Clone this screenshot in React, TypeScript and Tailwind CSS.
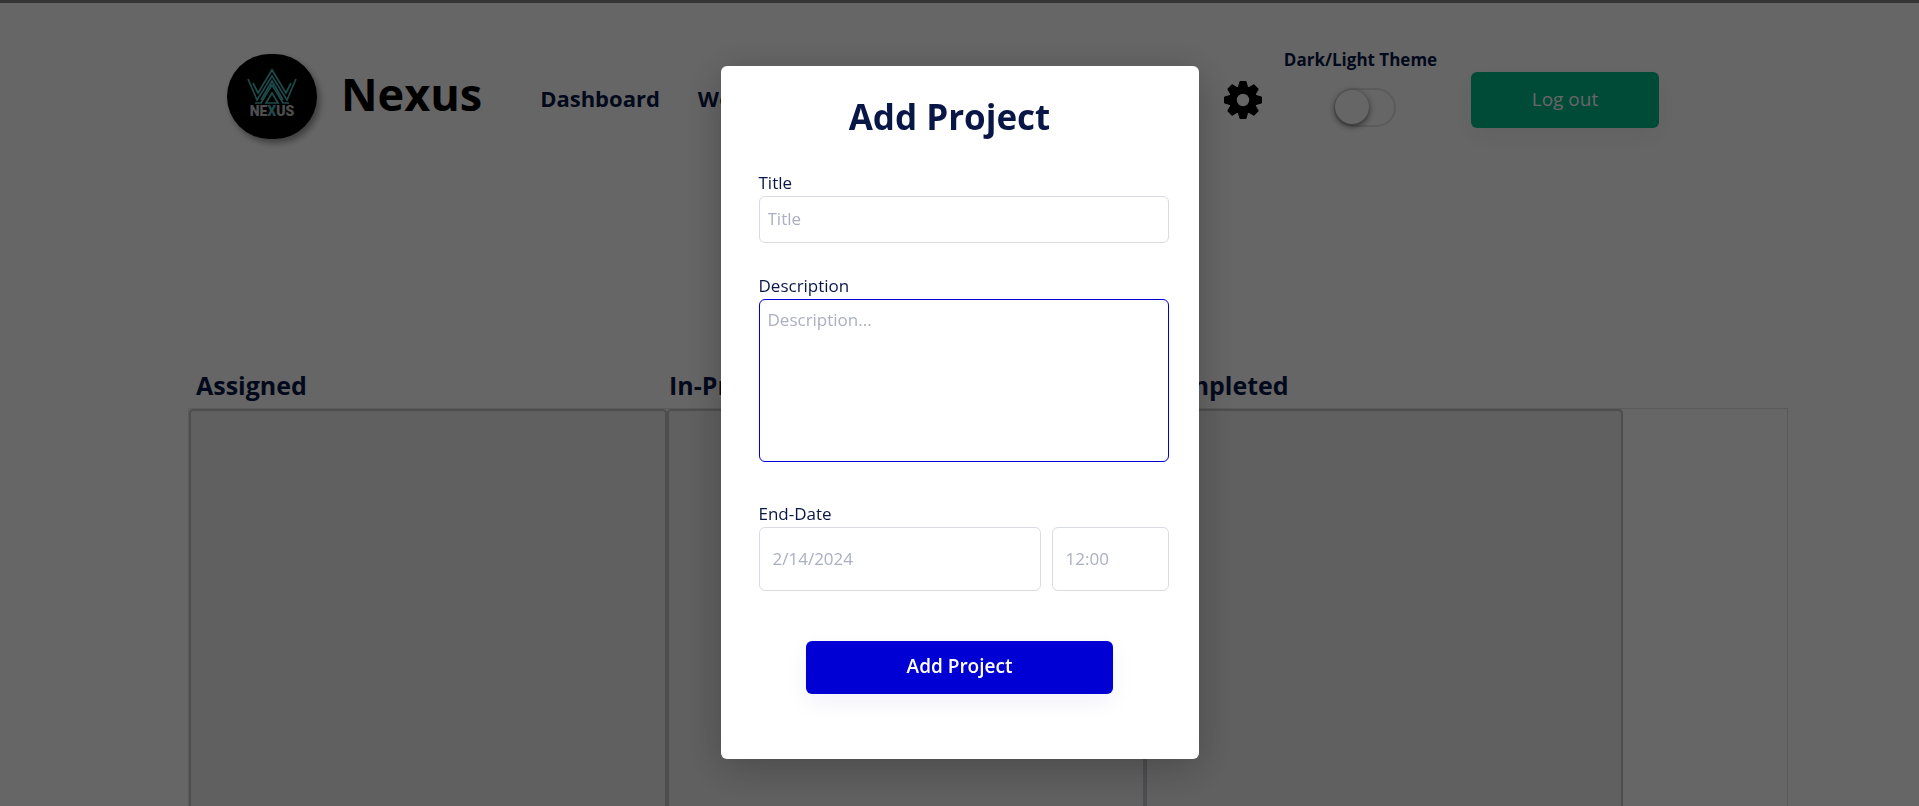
import React, { useState } from 'react';

const columns = ['Assigned', 'In-Progress', 'Completed'];

const NexusLogo = () => (
  <svg viewBox="0 0 90 85" className="h-[85px] w-[90px] rounded-full bg-black shadow-[3px_4px_6px_rgba(0,0,0,0.4)]">
    <g fill="none" stroke="#4fb9bd" strokeWidth="1.7">
      <path d="M21 25 30 46 45 22 60 46 69 25" />
      <path d="M26 29 31 39 45 16 59 39 64 29" />
      <path d="M28 49H34L45 31 56 49H62" />
      <path d="M34 46 45 27 56 46" />
      <path d="M39 49 45 39 51 49Z" />
    </g>
    <text
      x="45"
      y="62"
      textAnchor="middle"
      fontSize="14"
      fontWeight="900"
      fill="#c4c4c4"
      className="font-['Roboto',sans-serif]"
    >
      NE<tspan fill="#4fb9bd">X</tspan>US
    </text>
  </svg>
);

const GearIcon = () => (
  <svg viewBox="0 0 38 38" className="size-[38px]">
    <g fill="#000">
      {[0, 45, 90, 135].map((angle) => (
        <path
          key={angle}
          d="M16 0.5H22L23.5 6V32L22 37.5H16L14.5 32V6Z"
          stroke="#000"
          strokeLinejoin="round"
          transform={`rotate(${angle} 19 19)`}
        />
      ))}
      <circle cx="19" cy="19" r="14" />
    </g>
    <circle cx="19" cy="19" r="6.2" fill="#fff" />
  </svg>
);

const ThemeSwitch = () => {
  const [light, setLight] = useState(false);

  return (
    <label className="flex min-w-[157px] flex-col items-center gap-4 text-[17px] font-bold leading-6">
      <span>Dark/Light Theme</span>
      <span className="relative ml-2 h-[39px] w-[62px]">
        <input
          type="checkbox"
          checked={light}
          onChange={() => setLight(!light)}
          className="peer size-full appearance-none rounded-full border-2 border-[#e4e4e4]"
        />
        <span className="pointer-events-none absolute left-[1px] top-[2px] size-[34px] rounded-full bg-white shadow-[0_2px_6px_rgba(0,0,0,0.6)] peer-checked:left-[27px]" />
      </span>
    </label>
  );
};

const Header = () => (
  <header className="flex h-[187px] items-start pl-[227px] pr-[260px] pt-[51px]">
    <NexusLogo />
    <span className="ml-6 mt-2 text-[45px] font-bold leading-[64px] text-black">Nexus</span>
    <nav className="ml-[58px] mt-7 flex gap-[38px] text-[22px] font-bold leading-8">
      <a href="#dashboard">Dashboard</a>
      <a href="#workspace">Workspace</a>
    </nav>
    <div className="ml-auto flex items-start">
      <button type="button" aria-label="Settings" className="mr-5 mt-[27px]">
        <GearIcon />
      </button>
      <div className="-mt-1.5">
        <ThemeSwitch />
      </div>
      <button
        type="button"
        className="ml-8 mt-[18px] h-14 w-[188px] rounded-md bg-[#00b98d] pb-0.5 text-[19px] font-medium text-white shadow-[0_8px_24px_rgba(0,0,80,0.06)]"
      >
        Log out
      </button>
    </div>
  </header>
);

const Board = () => (
  <main className="flex flex-1 flex-col pl-[188px] pr-[131px] pt-[176px]">
    <div className="grid grid-cols-[473fr_484fr_478fr] pb-1 pr-[165px]">
      {columns.map((name) => (
        <h2 key={name} className="pl-2 text-[25px] font-bold leading-[38px]">
          {name}
        </h2>
      ))}
    </div>
    <div className="flex flex-1 border border-b-0 border-[#e0e0e0] pr-[164px]">
      {columns.map((name) => (
        <section key={name} className="flex-1 rounded-t-sm border-2 border-b-0 border-[#c3c3c8] bg-[#f0f0f0]" />
      ))}
    </div>
  </main>
);

const fieldClass =
  'rounded-md border border-[#d9dbe4] bg-white text-[17px] text-[#091747] outline-none placeholder:text-[#aaafc2] placeholder:opacity-100';

const AddProjectModal = () => (
  <div className="fixed inset-0 flex items-start justify-center bg-black/60 pt-[66px]">
    <form
      role="dialog"
      aria-labelledby="modal-title"
      onSubmit={(e) => e.preventDefault()}
      className="flex w-[478px] flex-col rounded-md bg-white pb-[65px] pl-[38px] pr-[30px] pt-[27px] text-[17px] leading-[23px] shadow-[0_8px_40px_rgba(0,0,0,0.25)]"
    >
      <h1 id="modal-title" className="mb-[30px] pr-7 text-center text-[35px] font-bold leading-[48px]">
        Add Project
      </h1>

      <label htmlFor="title" className="pb-0.5">Title</label>
      <input id="title" type="text" placeholder="Title" className={`${fieldClass} mb-[31px] h-[47px] px-2 pb-0.5`} />

      <label htmlFor="description" className="pb-0.5">Description</label>
      <textarea
        id="description"
        placeholder="Description..."
        className={`${fieldClass} mb-10 h-[163px] resize-none border-[#0000d4]! px-2 py-2`}
      />

      <label htmlFor="end-date" className="pb-0.5">End-Date</label>
      <div className="flex gap-[11px]">
        <input id="end-date" type="text" placeholder="2/14/2024" className={`${fieldClass} h-16 min-w-0 flex-1 px-[13px] pb-0.5`} />
        <input type="text" aria-label="End time" placeholder="12:00" className={`${fieldClass} h-16 w-[117px] px-[13px] pb-0.5`} />
      </div>

      <button
        type="submit"
        className="mr-2 mt-[50px] h-[53px] w-[307px] self-center rounded-md bg-[#0000d4] pb-0.5 text-[19px] font-semibold text-white shadow-[0_8px_24px_rgba(0,0,160,0.06)]"
      >
        Add Project
      </button>
    </form>
  </div>
);

export default function App() {
  return (
    <div className="flex min-h-screen flex-col border-t-[3px] border-[#858585] bg-white font-['Open_Sans',sans-serif] text-[#091747]">
      <Header />
      <Board />
      <AddProjectModal />
    </div>
  );
}
